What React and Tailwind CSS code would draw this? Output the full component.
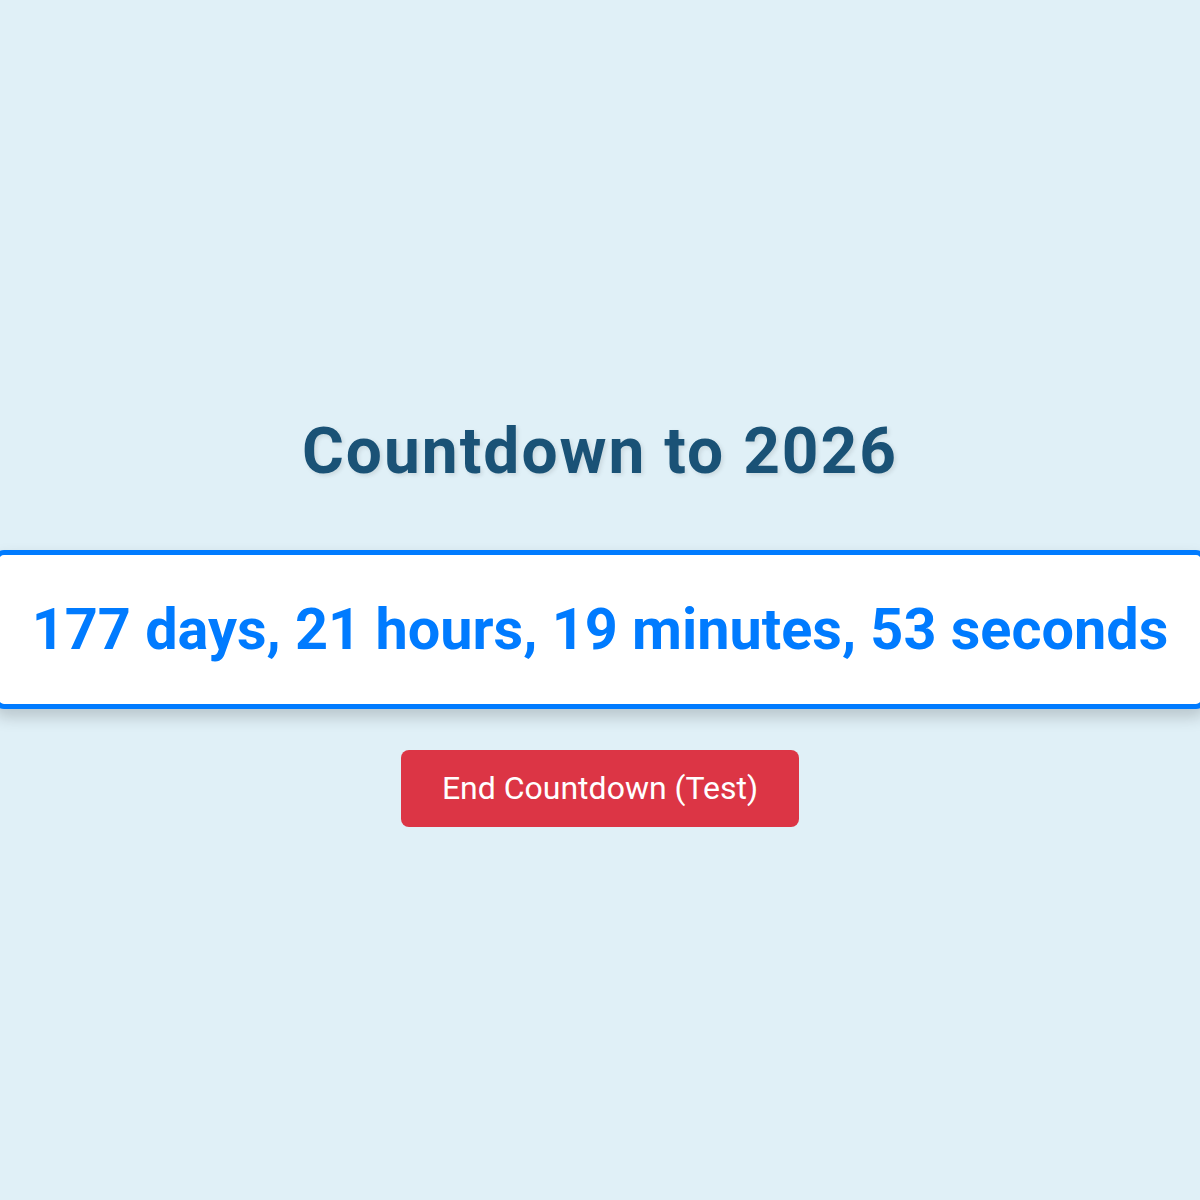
import React from 'react';

const App = () => {
  return (
    <div className="min-h-screen w-full overflow-hidden bg-[#e0f0f7] flex flex-col items-center pt-[414px] font-['Roboto',sans-serif]">
      <h1 className="text-[64px] font-bold text-[#1a5276] tracking-[2px] leading-[75px] [text-shadow:2px_2px_4px_rgba(0,0,0,0.1)]">
        Countdown to 2026
      </h1>

      {/* Timer box */}
      <div className="mt-[61px] shrink-0 whitespace-nowrap rounded-[10px] border-[5px] border-[#007bff] bg-white px-[33px] py-[41px] shadow-[0_8px_16px_rgba(0,0,0,0.18)]">
        <p className="text-[57.6px] font-bold text-[#007bff] leading-[67px]">
          177 days, 21 hours, 19 minutes, 53 seconds
        </p>
      </div>

      <button className="mt-[41px] rounded-[8px] bg-[#dc3545] px-[41px] py-[20px] text-[32px] leading-[37px] text-white">
        End Countdown (Test)
      </button>
    </div>
  );
};

export default App;
